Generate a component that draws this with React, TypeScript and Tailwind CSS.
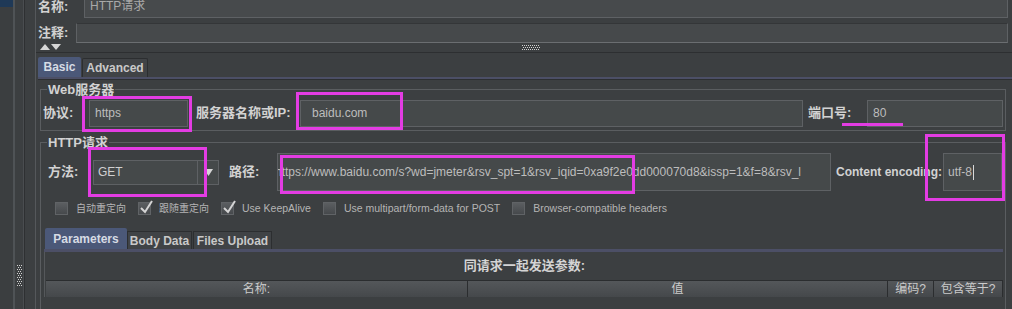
import React from 'react';

// JMeter HTTP request sampler panel (Darcula look) with annotation boxes on top

function Grip({ w, h }: { w: number; h: number }) {
  const dots: React.ReactNode[] = [];
  for (let y = 0; y < h; y += 2) {
    for (let x = (y / 2) % 2; x < w; x += 2) {
      dots.push(<rect key={`${x}-${y}`} x={x} y={y} width={1} height={1} fill="#d0d0d0" />);
    }
  }
  return (
    <svg width={w} height={h} className="block">
      {dots}
    </svg>
  );
}

function Check({ on, label, cjk }: { on?: boolean; label: string; cjk?: boolean }) {
  return (
    <div className="mr-[12px] flex items-center">
      <span className="relative h-[13px] w-[13px] border border-[#606366] bg-gradient-to-b from-[#5b5e61] to-[#46494c]">
        {on && (
          <svg width="15" height="15" viewBox="0 0 15 15" className="absolute left-[0px] top-[-3px]">
            <path d="M2 8 L6 12 L13 1" stroke="#d4d4d4" strokeWidth="2" fill="none" />
          </svg>
        )}
      </span>
      <span className={`ml-[8px] ${cjk ? 'text-[10px]' : 'text-[10.5px]'} leading-[13px] text-[#b4b4b4]`}>{label}</span>
    </div>
  );
}

function Field({ className, children }: { className: string; children?: React.ReactNode }) {
  return (
    <div className={`flex shrink-0 items-center overflow-hidden whitespace-nowrap border border-[#5e6164] bg-[#45494a] text-[12px] text-[#bdbdbd] ${className}`}>
      {children}
    </div>
  );
}

function LeftRail() {
  return (
    <div className="flex h-full w-[36px] shrink-0">
      <div className="flex w-[13px] flex-col">
        <div className="h-[7px] bg-[#1f3957]" />
        <div className="flex-1 bg-[#3b3e40]" />
      </div>
      <div className="w-[2px] bg-[#4f5356]" />
      <div className="flex w-[8px] flex-col items-center pt-[265px]">
        <Grip w={5} h={22} />
      </div>
      <div className="w-[1px] bg-[#4a4d50]" />
      <div className="w-[1px] bg-[#2e3032]" />
      <div className="w-[10px]" />
      <div className="w-[1px] bg-[#55585b]" />
    </div>
  );
}

const label = 'shrink-0 text-[13px] font-bold text-[#d2d2d2] whitespace-nowrap';

export default function App() {
  return (
    <div className="relative flex h-[309px] w-[1012px] overflow-hidden bg-[#3c3f41] font-['Liberation_Sans','Noto_Sans_CJK_SC',sans-serif] text-[#bbbbbb]">
      <LeftRail />

      <div className="flex w-[976px] flex-col *:shrink-0">
        {/* 名称 */}
        <div className="flex h-[22px] items-start">
          <span className={`w-[48px] pl-[2px] leading-[13px] ${label}`}>名称:</span>
          <div className="h-[18px] flex-1 border-x border-b border-[#5e6164] bg-[#474a4c] pl-[5px] text-[12px] leading-[12px] text-[#a9a9a9]">HTTP请求</div>
          <div className="w-[4px] border-l border-[#2e3032]" />
        </div>

        {/* 注释 */}
        <div className="flex h-[21px] items-center">
          <span className={`w-[40px] pl-[2px] leading-[14px] ${label}`}>注释:</span>
          <div className="mt-[1px] h-[20px] flex-1 border-x border-b border-t border-[#5e6164] border-b-[#6b6e71] border-t-[#343638] bg-[#46494b]" />
          <div className="w-[4px] border-l border-[#2e3032]" />
        </div>

        {/* splitter */}
        <div className="flex h-[10px] items-center border-b border-[#2d2f31] pl-[4px]">
          <svg width="22" height="7" className="block">
            <polygon points="0,6 5,0 10,6" fill="#d6d6d6" />
            <polygon points="11,0 21,0 16,6" fill="#d6d6d6" />
          </svg>
          <div className="ml-[460px]">
            <Grip w={18} h={6} />
          </div>
        </div>

        <div className="h-[4px]" />

        {/* Basic / Advanced */}
        <div className="flex h-[20px] items-end pl-[2px]">
          <div className="flex h-[20px] w-[43px] items-center justify-center rounded-t-[2px] bg-[#4b5878] text-[12px] font-bold text-[#d6dbe4]">Basic</div>
          <div className="ml-[1px] flex h-[19px] w-[66px] items-center justify-center rounded-t-[2px] border border-b-0 border-[#2c2e30] bg-[#404346] text-[12px] font-bold text-[#c9c9c9]">Advanced</div>
        </div>
        <div className="ml-[2px] h-[2px] bg-[#4c4f66]" />
        <div className="ml-[2px] h-[1px] bg-[#2d2f31]" />

        <div className="flex flex-col *:shrink-0">
          {/* Web服务器 */}
          <fieldset className="ml-[4px] mr-[6px] mt-[3px] border border-[#5a5d60]">
            <legend className={`ml-[6px] px-[1px] leading-[13px] ${label}`}>Web服务器</legend>
            <div className="flex h-[34px] items-center pl-[2px] pr-[2px]">
              <span className={`w-[46px] ${label}`}>协议:</span>
              <Field className="h-[27px] w-[99px] pl-[5px]">https</Field>
              <span className={`ml-[8px] w-[104px] ${label}`}>服务器名称或IP:</span>
              <Field className="h-[27px] flex-1 shrink pl-[11px]">baidu.com</Field>
              <span className={`ml-[5px] w-[59px] ${label}`}>端口号:</span>
              <Field className="h-[27px] w-[136px] pl-[5px]">80</Field>
            </div>
          </fieldset>

          {/* HTTP请求 */}
          <fieldset className="ml-[4px] mr-[6px] mt-[5px] h-[200px] border border-[#5a5d60]">
            <legend className={`ml-[6px] px-[1px] leading-[13px] ${label}`}>HTTP请求</legend>

            <div className="mt-[4px] flex h-[38px] items-center pl-[7px]">
              <span className={`w-[45px] ${label}`}>方法:</span>
              <Field className="h-[25px] w-[105px] pl-[4px] text-[#d0d0d0]">GET</Field>
              <div className="flex h-[25px] w-[21px] shrink-0 items-center justify-center border border-l-0 border-[#5e6164] bg-[#45494a]">
                <svg width="9" height="7" className="block">
                  <polygon points="0,0 9,0 4.5,7" fill="#d6d6d6" />
                </svg>
              </div>
              <span className={`ml-[10px] w-[48px] ${label}`}>路径:</span>
              <Field className="h-[38px] w-[554px] indent-[-3px]">
                https://www.baidu.com/s?wd=jmeter&amp;rsv_spt=1&amp;rsv_iqid=0xa9f2e0dd000070d8&amp;issp=1&amp;f=8&amp;rsv_l
              </Field>
              <span className="ml-[5px] w-[107px] shrink-0 whitespace-nowrap text-[12px] font-bold text-[#d2d2d2]">Content encoding:</span>
              <Field className="h-[38px] w-[59px] border-[#4d7096] pl-[4px]">
                utf-8<span className="ml-[1px] inline-block h-[15px] w-[1px] bg-[#d8d8d8]" />
              </Field>
            </div>

            <div className="mt-[11px] flex h-[13px] items-center pl-[14px]">
              <Check label="自动重定向" cjk />
              <Check on label="跟随重定向" cjk />
              <Check on label="Use KeepAlive" />
              <Check label="Use multipart/form-data for POST" />
              <Check label="Browser-compatible headers" />
            </div>

            {/* Parameters tabs */}
            <div className="ml-[3px] mr-[2px] mt-[13px] flex flex-col *:shrink-0">
              <div className="flex h-[21px] items-end pl-[1px]">
                <div className="flex h-[21px] w-[82px] items-center justify-center rounded-t-[2px] bg-[#4b5878] text-[12px] font-bold text-[#d6dbe4]">Parameters</div>
                <div className="flex h-[18px] w-[65px] items-center justify-center border border-b-0 border-[#2c2e30] bg-[#404346] text-[12px] font-bold text-[#c9c9c9]">Body Data</div>
                <div className="ml-[1px] flex h-[18px] w-[79px] items-center justify-center border border-b-0 border-[#2c2e30] bg-[#404346] text-[12px] font-bold text-[#c9c9c9]">Files Upload</div>
              </div>
              <div className="h-[3px] bg-[#4c4f66]" />
              <div className="flex flex-col border-l border-[#55585b] pl-[1px] *:shrink-0">
                <div className="flex h-[28px] items-center justify-center text-[13px] font-bold text-[#d4d4d4]">同请求一起发送参数:</div>
                <div className="grid h-[17px] grid-cols-[421px_420px_46px_70px] border-t border-[#2b2d2f] bg-gradient-to-b from-[#54575a] to-[#45484b] text-[12px] leading-[16px] text-[#cbcbcb]">
                  <div className="text-center">名称:</div>
                  <div className="border-l border-[#2b2d2f] text-center">值</div>
                  <div className="border-l border-[#2b2d2f] text-center">编码?</div>
                  <div className="border-x border-[#2b2d2f] text-center">包含等于?</div>
                </div>
              </div>
            </div>
          </fieldset>
        </div>
      </div>

      {/* annotation marks */}
      <div className="absolute left-[82px] top-[96px] h-[36px] w-[110px] border-[3px] border-[#e33ce3]" />
      <div className="absolute left-[296px] top-[92px] h-[38px] w-[107px] border-[3px] border-[#e33ce3]" />
      <div className="absolute left-[842px] top-[123px] h-[3px] w-[61px] bg-[#e33ce3]" />
      <div className="absolute left-[88px] top-[147px] h-[50px] w-[119px] border-[3px] border-[#e33ce3]" />
      <div className="absolute left-[280px] top-[155px] h-[39px] w-[355px] border-[3px] border-[#e33ce3]" />
      <div className="absolute left-[925px] top-[134px] h-[67px] w-[80px] border-[3px] border-[#e33ce3]" />
    </div>
  );
}
